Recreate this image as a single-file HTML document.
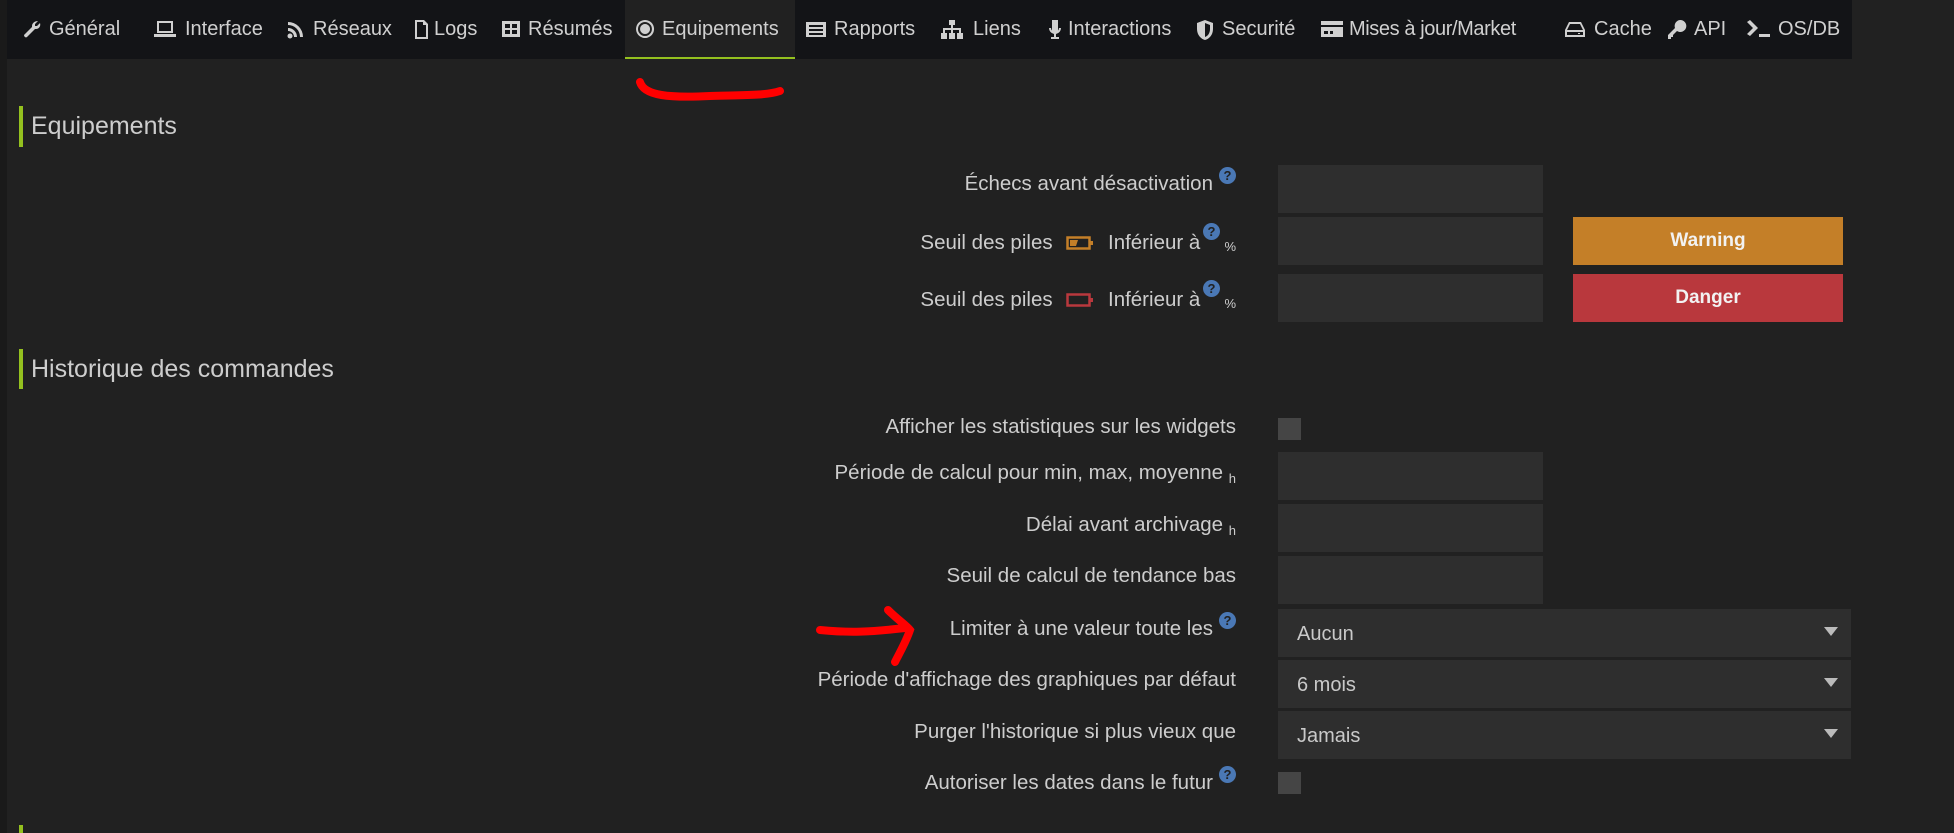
<!DOCTYPE html>
<html><head><meta charset="utf-8"><style>
*{margin:0;padding:0;box-sizing:border-box}
body{width:1954px;height:833px;background:#212121;position:relative;overflow:hidden;font-family:"Liberation Sans",sans-serif;color:#c9c9c9}
.a{position:absolute}
#nav{left:7px;top:0;width:1852px;height:59px;background:#131417}
.ni{position:absolute;top:0;height:59px;line-height:58px;font-size:20px;color:#d0d0d0;white-space:nowrap}
.ni svg{position:absolute;top:19px;fill:#d0d0d0}
.act{background:#212121;border-bottom:2px solid #94c11f}
.sec{position:absolute;left:19px;border-left:4px solid #94c11f;padding-left:8px;font-size:25px;color:#cdcdcd}
.lb{position:absolute;right:718px;font-size:20.5px;color:#cdcdcd;white-space:nowrap;text-align:right}
.lbq{right:741px}
.q{position:absolute;width:17px;height:17px;border-radius:50%;background:#4a78b5;color:#212121;font-size:13px;font-weight:bold;text-align:center;line-height:17px}
.in{position:absolute;left:1278px;width:265px;height:48px;background:#2e2e2e}
.sel{position:absolute;left:1278px;width:573px;height:48px;background:#2e2e2e;font-size:20px;color:#c9c9c9;padding-left:19px;line-height:50px}
.sel:after{content:"";position:absolute;right:13px;top:18px;border-left:7px solid transparent;border-right:7px solid transparent;border-top:9px solid #bbb}
.cb{position:absolute;left:1278px;width:23px;height:22px;background:#454545}
.btn{position:absolute;left:1573px;width:270px;height:48px;color:#f2f2f2;font-size:19px;font-weight:bold;text-align:center;line-height:48px}
sub{font-size:13px;vertical-align:-4px}
</style></head><body>
<div class="a" style="left:0;top:0;width:7px;height:833px;background:#1a1a1a"></div>
<div id="nav">
<div class="ni act" style="left:625px;width:170px"></div>
<div class="ni" style="left:21px"><svg width="20" height="20" viewBox="0 0 20 20"><path d="M17 2l-3 3 0 2 2 0 3-3c1 3-1 6-4 6l-1 0-8 8c-1 1-3 0-3-2l8-8 0-1c0-3 3-5 6-5z"/></svg><span style="margin-left:28px">Général</span></div>
<div class="ni" style="left:154px"><svg width="22" height="20" viewBox="0 0 22 20"><path d="M3 2h16v12H3z M5 4v8h12V4z M0 15h22v3H0z"/></svg><span style="margin-left:31px">Interface</span></div>
<div class="ni" style="left:287px"><svg width="18" height="20" viewBox="0 0 18 20"><circle cx="3" cy="17" r="2.5"/><path d="M1 9a9 9 0 0 1 9 9h-3a6 6 0 0 0-6-6z M1 3a15 15 0 0 1 15 15h-3A12 12 0 0 0 1 6z"/></svg><span style="margin-left:26px">Réseaux</span></div>
<div class="ni" style="left:414px"><svg width="15" height="21" viewBox="0 0 15 21"><path d="M1 1h9l4 4v15H1z M3 3v15h9V6H9V3z"/></svg><span style="margin-left:20px">Logs</span></div>
<div class="ni" style="left:501px"><svg width="20" height="20" viewBox="0 0 20 20"><path d="M1 2h18v16H1z M4 5v4h5V5z M11 5v4h5V5z M4 11v4h5v-4z M11 11v4h5v-4z"/></svg><span style="margin-left:27px">Résumés</span></div>
<div class="ni" style="left:635px"><svg width="20" height="20" viewBox="0 0 20 20"><path d="M10 1a9 9 0 1 0 0.1 0z M10 3a7 7 0 1 1-0.1 0z M10 5a5 5 0 1 0 0.1 0z" fill-rule="evenodd"/></svg><span style="margin-left:27px">Equipements</span></div>
<div class="ni" style="left:805px"><svg width="22" height="20" viewBox="0 0 22 20"><path d="M1 3h20v15H1z M4 6v2h14V6z M4 10v2h14v-2z M4 14v2h14v-2z" fill-rule="evenodd"/></svg><span style="margin-left:29px">Rapports</span></div>
<div class="ni" style="left:940px"><svg width="24" height="22" viewBox="0 0 24 22"><path d="M9 1h6v5h-2v3h8v5h2v6h-6v-6h2v-3H13v3h2v6H9v-6h2v-3H5v3h2v6H1v-6h2v-5h8V6H9z"/></svg><span style="margin-left:33px">Liens</span></div>
<div class="ni" style="left:1048px"><svg width="14" height="22" viewBox="0 0 14 22"><path d="M4 1h6v12H4z M1 9h2a4 4 0 0 0 8 0h2a6 6 0 0 1-5 6v3h3v2H3v-2h3v-3a6 6 0 0 1-5-6z"/></svg><span style="margin-left:20px">Interactions</span></div>
<div class="ni" style="left:1196px"><svg width="18" height="22" viewBox="0 0 18 22"><path d="M9 1l8 3v6c0 6-4 10-8 11-4-1-8-5-8-11V4z M9 4v14c3-1 5-4 5-8V6z" fill-rule="evenodd"/></svg><span style="margin-left:26px">Securité</span></div>
<div class="ni" style="left:1320px;letter-spacing:-0.4px"><svg width="24" height="20" viewBox="0 0 24 20"><path d="M1 2h22v4H1z M1 8h22v10H1z M4 12v3h4v-3z M10 12v3h3v-3z" fill-rule="evenodd"/></svg><span style="margin-left:29px">Mises à jour/Market</span></div>
<div class="ni" style="left:1564px"><svg width="22" height="20" viewBox="0 0 22 20"><path d="M5 3h12l4 8v7H1v-7z M6 5l-3 6h16l-3-6z M3 13v3h16v-3z M14 14h2v1h-2z" fill-rule="evenodd"/></svg><span style="margin-left:30px">Cache</span></div>
<div class="ni" style="left:1667px"><svg width="20" height="22" viewBox="0 0 20 22"><path d="M13 1a6 6 0 1 1-3 11l-4 4 0 2-2 0 0 2-3 0 0-4 7-7a6 6 0 0 1 5-8z"/></svg><span style="margin-left:27px">API</span></div>
<div class="ni" style="left:1746px"><svg width="26" height="20" viewBox="0 0 26 20"><path d="M1 3l3-2 8 8-8 8-3-2 6-6z M13 15h11v3H13z"/></svg><span style="margin-left:32px">OS/DB</span></div>
</div>
<svg class="a" style="left:630px;top:72px" width="160" height="36"><path d="M10 10 C14 24 40 26 80 24 C110 23 135 24 150 19" stroke="#f00" stroke-width="8" fill="none" stroke-linecap="round"/></svg>
<div class="sec" style="top:106px;height:41px;line-height:41px">Equipements</div>
<div class="lb lbq" style="top:172px">Échecs avant désactivation</div><div class="q" style="left:1219px;top:167px">?</div>
<div class="in" style="top:165px"></div>
<div class="lb" style="top:231px;right:718px">Seuil des piles <svg width="28" height="16" style="margin:0 8px;vertical-align:-2px"><rect x="1.5" y="2.5" width="22" height="11" fill="none" stroke="#c47f28" stroke-width="2.5"/><rect x="24" y="6" width="3" height="4" fill="#c47f28"/><path d="M4 5h8l-2 6H4z" fill="#c47f28"/></svg> Inférieur à <span style="display:inline-block;width:30px"></span><sub style="position:absolute;right:0;top:8px">%</sub></div>
<div class="q" style="left:1203px;top:223px">?</div>
<div class="in" style="top:217px"></div>
<div class="btn" style="top:217px;background:#c47f28">Warning</div>
<div class="lb" style="top:288px">Seuil des piles <svg width="28" height="16" style="margin:0 8px;vertical-align:-2px"><rect x="1.5" y="2.5" width="22" height="11" fill="none" stroke="#b9383d" stroke-width="2.5"/><rect x="24" y="6" width="3" height="4" fill="#b9383d"/></svg> Inférieur à <span style="display:inline-block;width:30px"></span><sub style="position:absolute;right:0;top:8px">%</sub></div>
<div class="q" style="left:1203px;top:280px">?</div>
<div class="in" style="top:274px"></div>
<div class="btn" style="top:274px;background:#b9383d">Danger</div>
<div class="sec" style="top:349px;height:40px;line-height:40px">Historique des commandes</div>
<div class="lb" style="top:415px">Afficher les statistiques sur les widgets</div>
<div class="cb" style="top:418px"></div>
<div class="lb" style="top:461px">Période de calcul pour min, max, moyenne <sub>h</sub></div>
<div class="in" style="top:452px"></div>
<div class="lb" style="top:513px">Délai avant archivage <sub>h</sub></div>
<div class="in" style="top:504px"></div>
<div class="lb" style="top:564px">Seuil de calcul de tendance bas</div>
<div class="in" style="top:556px"></div>
<svg class="a" style="left:810px;top:600px" width="110" height="68"><path d="M10 30 C40 33 60 32 95 28 M78 10 C88 20 96 25 100 30 C96 42 90 52 85 62" stroke="#f00" stroke-width="8" fill="none" stroke-linecap="round"/></svg>
<div class="lb lbq" style="top:617px">Limiter à une valeur toute les</div><div class="q" style="left:1219px;top:612px">?</div>
<div class="sel" style="top:609px">Aucun</div>
<div class="lb" style="top:668px">Période d'affichage des graphiques par défaut</div>
<div class="sel" style="top:660px">6 mois</div>
<div class="lb" style="top:720px">Purger l'historique si plus vieux que</div>
<div class="sel" style="top:711px">Jamais</div>
<div class="lb lbq" style="top:771px">Autoriser les dates dans le futur</div><div class="q" style="left:1219px;top:766px">?</div>
<div class="cb" style="top:772px"></div>
<div class="a" style="left:19px;top:825px;width:4px;height:8px;background:#94c11f"></div>
</body></html>
